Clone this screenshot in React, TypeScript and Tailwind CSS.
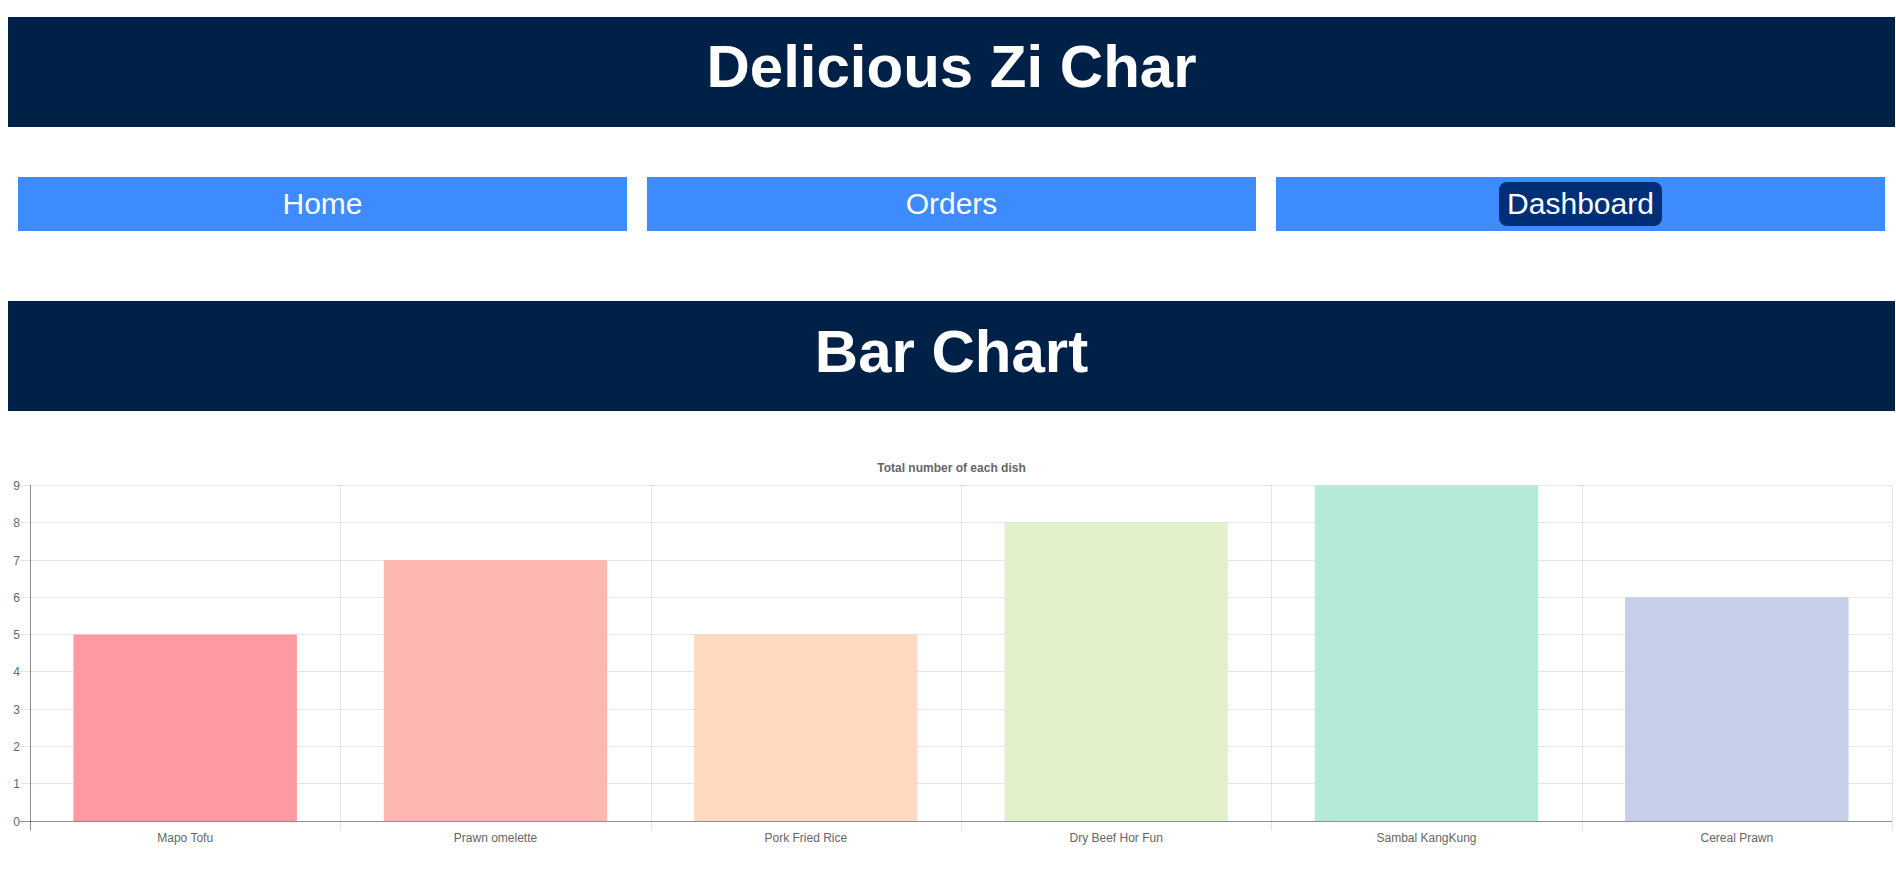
import React from "react";

const data = [
  { label: "Mapo Tofu", value: 5, color: "#ff9aa2" },
  { label: "Prawn omelette", value: 7, color: "#ffb7b2" },
  { label: "Pork Fried Rice", value: 5, color: "#ffdac1" },
  { label: "Dry Beef Hor Fun", value: 8, color: "#e2f0cb" },
  { label: "Sambal KangKung", value: 9, color: "#b5ead7" },
  { label: "Cereal Prawn", value: 6, color: "#c7ceea" },
];

function Chart() {
  const W = 1887;
  const H = 420;
  const left = 22;
  const right = 1884;
  const top = 35;
  const bottom = 370.5;
  const catW = (right - left) / data.length;
  const unit = (bottom - top) / 9;
  const font = "'Liberation Sans', Arial, Helvetica, sans-serif";
  return (
    <svg width={W} height={H} className="block" style={{ fontFamily: font }}>
      <text x={W / 2} y={22} textAnchor="middle" fontSize={12} fontWeight="bold" fill="#666">
        Total number of each dish
      </text>
      {Array.from({ length: 10 }).map((_, i) => {
        const y = Math.round(bottom - i * unit) + 0.5;
        return (
          <g key={"h" + i}>
            <line
              x1={left - 10}
              x2={right}
              y1={y}
              y2={y}
              stroke={i === 0 ? "rgba(0,0,0,0.25)" : "rgba(0,0,0,0.1)"}
              strokeWidth={1}
            />
            <text x={left - 10} y={y + 4} textAnchor="end" fontSize={12} fill="#666">
              {i}
            </text>
          </g>
        );
      })}
      {Array.from({ length: data.length + 1 }).map((_, i) => {
        const x = Math.round(left + i * catW) + 0.5;
        return (
          <line
            key={"v" + i}
            x1={x}
            x2={x}
            y1={top}
            y2={bottom + 10}
            stroke={i === 0 ? "rgba(0,0,0,0.25)" : "rgba(0,0,0,0.1)"}
            strokeWidth={1}
          />
        );
      })}
      {data.map((d, i) => {
        const bw = catW * 0.72;
        const x = left + i * catW + (catW - bw) / 2;
        const h = d.value * unit;
        return <rect key={d.label} x={x} y={Math.round(bottom) - h} width={bw} height={h} fill={d.color} />;
      })}
      <line x1={left - 10} x2={right} y1={Math.round(bottom) + 0.5} y2={Math.round(bottom) + 0.5} stroke="rgba(0,0,0,0.25)" />
      <line x1={left + 0.5} x2={left + 0.5} y1={top} y2={bottom + 10} stroke="rgba(0,0,0,0.25)" />
      {data.map((d, i) => (
        <text
          key={"l" + i}
          x={left + i * catW + catW / 2}
          y={392}
          textAnchor="middle"
          fontSize={12}
          fill="#666"
        >
          {d.label}
        </text>
      ))}
    </svg>
  );
}

export default function App() {
  return (
    <div
      className="min-h-screen bg-white pt-[17px] pl-[8px]"
      style={{ fontFamily: "'Liberation Sans', Arial, sans-serif" }}
    >
      <div className="w-[1887px]">
        <h1 className="h-[110px] bg-[#002147] pt-[16px] text-center text-[60px] font-bold leading-[67px] text-white">
          Delicious Zi Char
        </h1>
        <nav className="mt-[50px] flex">
          <a className="mx-[10px] flex h-[54px] flex-1 items-center justify-center bg-[#3d8bfd] text-[30px] leading-[34px] text-white">
            Home
          </a>
          <a className="mx-[10px] flex h-[54px] flex-1 items-center justify-center bg-[#3d8bfd] text-[30px] leading-[34px] text-white">
            Orders
          </a>
          <a className="mx-[10px] flex h-[54px] flex-1 items-center justify-center bg-[#3d8bfd] text-[30px] leading-[34px] text-white">
            <span className="rounded-[8px] bg-[#002f78] px-[8px] py-[5px]">Dashboard</span>
          </a>
        </nav>
        <h2 className="mt-[70px] h-[110px] bg-[#002147] pt-[17px] text-center text-[60px] font-bold leading-[67px] text-white">
          Bar Chart
        </h2>
        <div className="mt-[39px]">
          <Chart />
        </div>
      </div>
    </div>
  );
}
